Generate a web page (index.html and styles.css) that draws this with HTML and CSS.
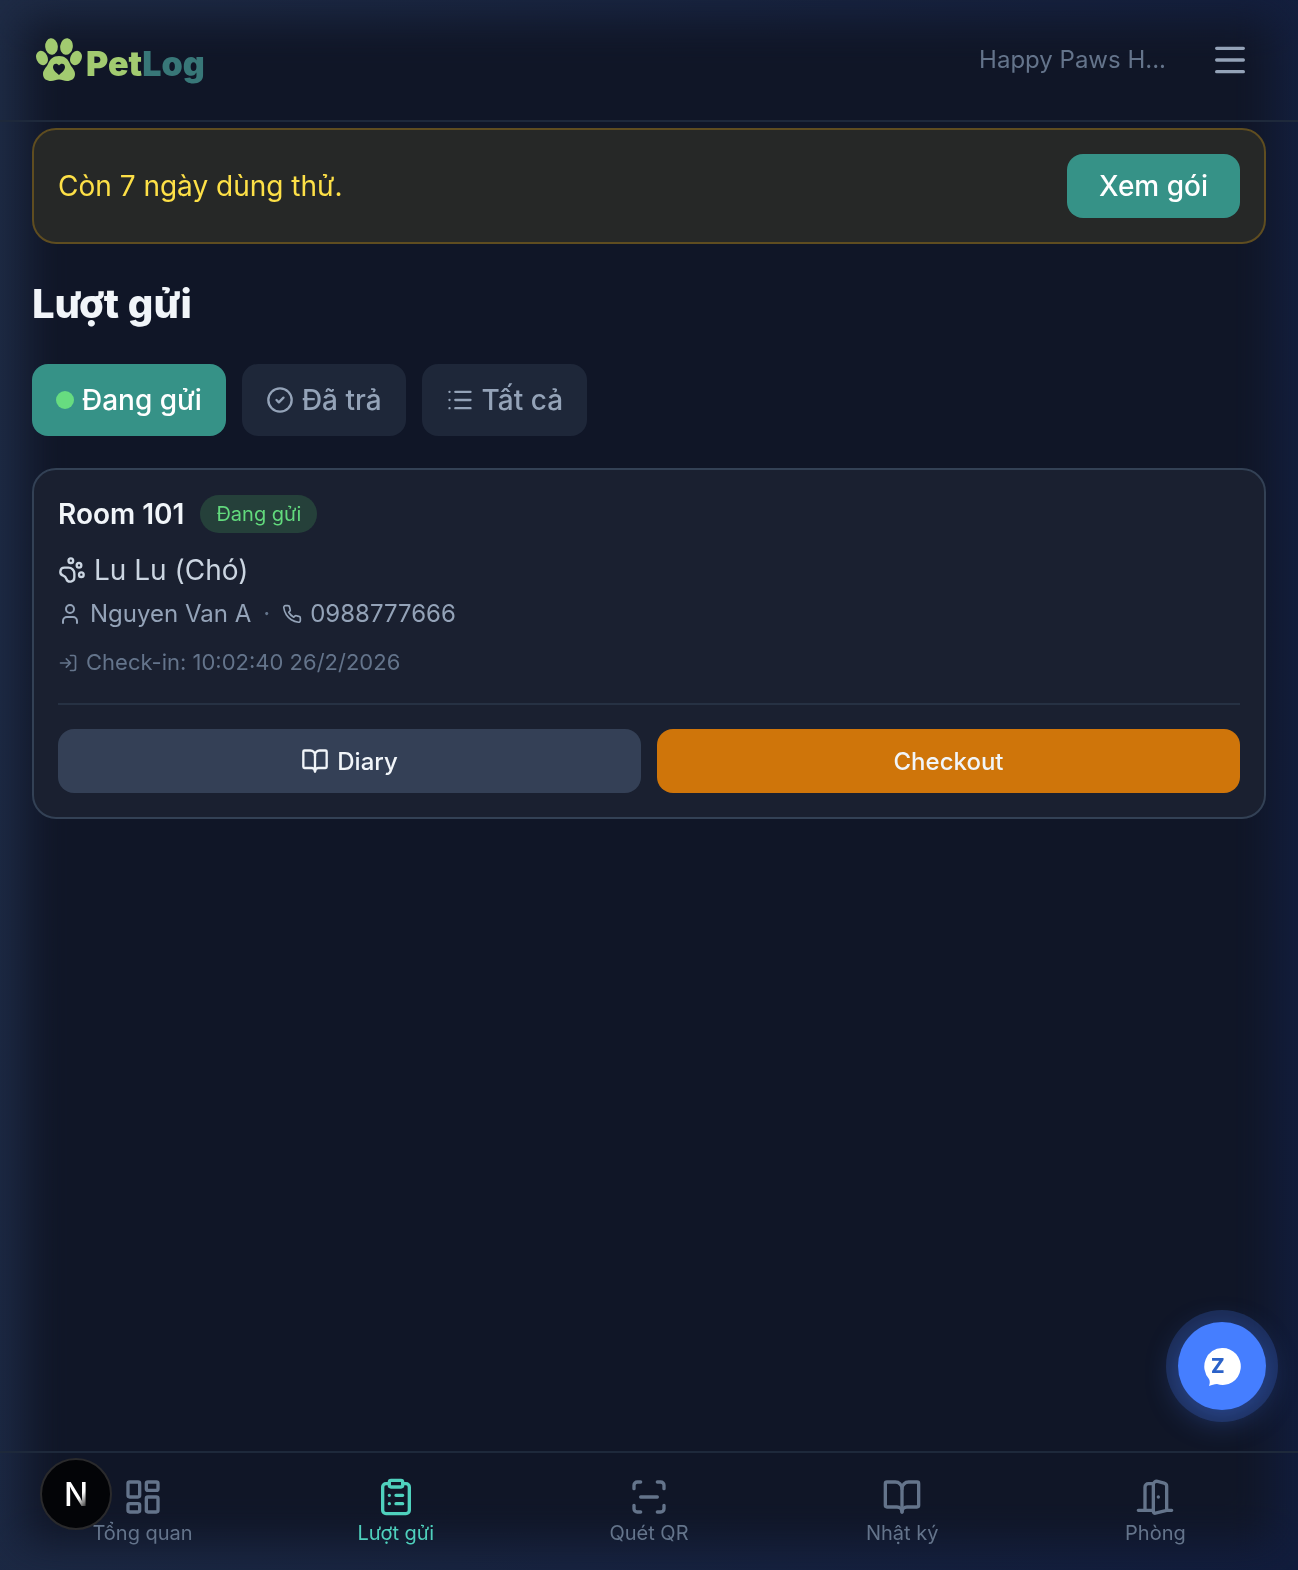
FILE: index.html
```
<!DOCTYPE html>
<html lang="vi">
<head>
<meta charset="utf-8">
<meta name="viewport" content="width=device-width, initial-scale=1">
<title>PetLog - Lượt gửi</title>
<link rel="stylesheet" href="styles.css">
</head>
<body>
	<header class="topbar">
		<a href="#" class="logo" aria-label="PetLog">
			<svg class="logo-paw" viewBox="0 0 46 44" aria-hidden="true">
				<g fill="#a2cb70">
					<ellipse cx="15.500" cy="8.500" rx="6.300" ry="8.300" transform="rotate(-6 15.500 8.500)"/>
					<ellipse cx="30.500" cy="8.500" rx="6.300" ry="8.300" transform="rotate(8 30.500 8.500)"/>
					<ellipse cx="6" cy="20" rx="5.600" ry="7.500" transform="rotate(-24 6 20)"/>
					<ellipse cx="40" cy="20" rx="5.600" ry="7.500" transform="rotate(24 40 20)"/>
					<path d="M23 18c6 0 9 3 11 8 2 4 5 6 5 10 0 5-4 7-8 7-3 0-5-1.500-8-1.500S18 43 15 43c-4 0-8-2-8-7 0-4 3-6 5-10 2-5 5-8 11-8z"/>
				</g>
				<path fill="#101628" d="M23 37c-3-2.500-6-5-6-8 0-3.500 4-4.500 6-1.500 2-3 6-2 6 1.500 0 3-3 5.500-6 8z"/>
			</svg>
			<span class="logo-text">Pet<span class="logo-log">Log</span></span>
		</a>
		<div class="topbar-right">
			<span class="shop-name">Happy Paws H...</span>
			<button type="button" class="menu-btn" aria-label="Menu">
				<svg class="icon icon-xl" viewBox="0 0 24 24"><path d="M4 5h16M4 12h16M4 19h16"/></svg>
			</button>
		</div>
	</header>

	<main class="content">
		<div class="trial">
			<span>Còn 7 ngày dùng thử.</span>
			<button type="button" class="trial-btn">Xem gói</button>
		</div>

		<h1>Lượt gửi</h1>

		<div class="tabs">
			<button type="button" class="tab tab-active"><span class="dot"></span>Đang gửi</button>
			<button type="button" class="tab">
				<svg class="icon icon-lg" viewBox="0 0 24 24"><circle cx="12" cy="12" r="10"/><path d="m9 12 2 2 4-4"/></svg>
				Đã trả
			</button>
			<button type="button" class="tab">
				<svg class="icon icon-lg" viewBox="0 0 24 24"><path d="M3 5h.01M3 12h.01M3 19h.01M8 5h13M8 12h13M8 19h13"/></svg>
				Tất cả
			</button>
		</div>

		<article class="card">
			<div class="card-head">
				<h2>Room 101</h2>
				<span class="badge">Đang gửi</span>
			</div>
			<div class="pet">
				<svg class="icon icon-lg" viewBox="0 0 24 24"><circle cx="11" cy="4" r="2"/><circle cx="18" cy="8" r="2"/><circle cx="20" cy="16" r="2"/><path d="M9 10a5 5 0 0 1 5 5v3.500a3.500 3.500 0 0 1-6.840 1.045Q6.520 17.480 4.460 16.840A3.500 3.500 0 0 1 5.500 10Z"/></svg>
				Lu Lu (Chó)
			</div>
			<div class="owner">
				<svg class="icon icon-md" viewBox="0 0 24 24"><path d="M19 21v-2a4 4 0 0 0-4-4H9a4 4 0 0 0-4 4v2"/><circle cx="12" cy="7" r="4"/></svg>
				<span>Nguyen Van A</span>
				<span class="sep">·</span>
				<a href="tel:0988777666" class="phone">
					<svg class="icon icon-sm" viewBox="0 0 24 24"><path d="M22 16.920v3a2 2 0 0 1-2.180 2 19.790 19.790 0 0 1-8.630-3.070 19.500 19.500 0 0 1-6-6 19.790 19.790 0 0 1-3.070-8.670A2 2 0 0 1 4.110 2h3a2 2 0 0 1 2 1.720 12.840 12.840 0 0 0 .7 2.810 2 2 0 0 1-.45 2.110L8.090 9.910a16 16 0 0 0 6 6l1.270-1.270a2 2 0 0 1 2.110-.45 12.840 12.840 0 0 0 2.810.7A2 2 0 0 1 22 16.920z"/></svg>
					0988777666
				</a>
			</div>
			<div class="checkin">
				<svg class="icon icon-sm" viewBox="0 0 24 24"><path d="m10 17 5-5-5-5M15 12H3M15 3h4a2 2 0 0 1 2 2v14a2 2 0 0 1-2 2h-4"/></svg>
				Check-in: 10:02:40 26/2/2026
			</div>
			<div class="actions">
				<button type="button" class="btn btn-diary">
					<svg class="icon icon-lg" viewBox="0 0 24 24"><path d="M12 7v14"/><path d="M3 18a1 1 0 0 1-1-1V4a1 1 0 0 1 1-1h5a4 4 0 0 1 4 4 4 4 0 0 1 4-4h5a1 1 0 0 1 1 1v13a1 1 0 0 1-1 1h-6a3 3 0 0 0-3 3 3 3 0 0 0-3-3z"/></svg>
					Diary
				</button>
				<button type="button" class="btn btn-checkout">Checkout</button>
			</div>
		</article>
	</main>

	<nav class="bottom-nav">
		<a href="#">
			<svg class="icon icon-xl" viewBox="0 0 24 24"><rect x="3" y="3" width="7" height="9" rx="1"/><rect x="14" y="3" width="7" height="5" rx="1"/><rect x="14" y="12" width="7" height="9" rx="1"/><rect x="3" y="16" width="7" height="5" rx="1"/></svg>
			<span>Tổng quan</span>
		</a>
		<a href="#" class="current">
			<svg class="icon icon-xl" viewBox="0 0 24 24"><rect x="8" y="2" width="8" height="4" rx="1"/><path d="M16 4h2a2 2 0 0 1 2 2v14a2 2 0 0 1-2 2H6a2 2 0 0 1-2-2V6a2 2 0 0 1 2-2h2M12 11h4M12 16h4M8 11h.01M8 16h.01"/></svg>
			<span>Lượt gửi</span>
		</a>
		<a href="#">
			<svg class="icon icon-xl" viewBox="0 0 24 24"><path d="M3 7V5a2 2 0 0 1 2-2h2M17 3h2a2 2 0 0 1 2 2v2M21 17v2a2 2 0 0 1-2 2h-2M7 21H5a2 2 0 0 1-2-2v-2M7 12h10"/></svg>
			<span>Quét QR</span>
		</a>
		<a href="#">
			<svg class="icon icon-xl" viewBox="0 0 24 24"><path d="M12 7v14"/><path d="M3 18a1 1 0 0 1-1-1V4a1 1 0 0 1 1-1h5a4 4 0 0 1 4 4 4 4 0 0 1 4-4h5a1 1 0 0 1 1 1v13a1 1 0 0 1-1 1h-6a3 3 0 0 0-3 3 3 3 0 0 0-3-3z"/></svg>
			<span>Nhật ký</span>
		</a>
		<a href="#">
			<svg class="icon icon-xl" viewBox="0 0 24 24"><path d="M11 20H2M11 4.562v16.157a1 1 0 0 0 1.242.970L19 20V5.562a2 2 0 0 0-1.515-1.940l-4-1A2 2 0 0 0 11 4.561zM11 4H8a2 2 0 0 0-2 2v14M14 12h.01M22 20h-3"/></svg>
			<span>Phòng</span>
		</a>
	</nav>

	<!-- floating buttons -->
	<a href="#" class="chat" aria-label="Zalo">
		<svg viewBox="0 0 40 40" width="40" height="40" aria-hidden="true">
			<path fill="#fff" d="M20 2a18 18.500 0 1 1-5 36c-3 0-5 1-8 2 1-3 1-5 0-7A18 18.500 0 0 1 20 2z"/>
			<text x="9" y="27" class="chat-z">Z</text>
		</svg>
	</a>
	<button type="button" class="dev-btn" aria-label="Dev tools"><span>N</span></button>
</body>
</html>
```
FILE: styles.css
```
* {
	box-sizing: border-box;
}
body {
	margin: 0;
	min-height: 100vh;
	display: flex;
	flex-direction: column;
	font-family: Inter, "Liberation Sans", sans-serif;
	font-size: 28px;
	line-height: 40px;
	color: #f1f5f9;
	background: linear-gradient(100deg, #1e2b45, #111c3c);
}
/* dark page with a soft glow left round the edges */
body::before {
	content: "";
	position: fixed;
	inset: 20px 24px 28px;
	background: #101627;
	filter: blur(20px);
	z-index: -1;
}
button {
	font-family: inherit;
	color: inherit;
	border: 0;
	cursor: pointer;
}
a {
	color: inherit;
	text-decoration: none;
}
h1, h2 {
	margin: 0;
}
.icon {
	flex: none;
	fill: none;
	stroke: currentColor;
	stroke-width: 2;
	stroke-linecap: round;
	stroke-linejoin: round;
}
.icon-sm {
	width: 20px;
	height: 20px;
}
.icon-md {
	width: 24px;
	height: 24px;
}
.icon-lg {
	width: 28px;
	height: 28px;
}
.icon-xl {
	width: 40px;
	height: 40px;
}

/* header */
.topbar {
	display: flex;
	align-items: center;
	justify-content: space-between;
	height: 122px;
	padding: 0 32px;
	border-bottom: 2px solid #1e293b;
}
.logo {
	display: flex;
	align-items: center;
	gap: 4px;
	padding-left: 4px;
}
.logo-paw {
	width: 46px;
	height: 44px;
}
.logo-text {
	font-size: 34px;
	font-weight: 900;
	color: #a2cb70;
	padding-top: 8px;
}
.logo-log {
	color: #387778;
}
.topbar-right {
	display: flex;
	align-items: center;
	gap: 28px;
}
.shop-name {
	font-size: 24px;
	color: #64748b;
}
.menu-btn {
	display: flex;
	padding: 16px;
	background: none;
	color: #94a3b8;
}

/* page */
.content {
	flex: 1;
	padding: 6px 32px 32px;
}
.trial {
	display: flex;
	align-items: center;
	justify-content: space-between;
	padding: 24px;
	border: 2px solid #5f4d20;
	border-radius: 24px;
	background: #262827;
	color: #fde047;
}
.trial-btn {
	height: 64px;
	padding: 0 32px;
	border-radius: 16px;
	background: #369287;
	color: #fff;
	font-size: 28px;
	font-weight: 500;
}
h1 {
	margin: 32px 0;
	font-size: 40px;
	line-height: 56px;
	font-weight: 800;
}
.tabs {
	display: flex;
	gap: 16px;
	margin-bottom: 32px;
}
.tab {
	display: flex;
	align-items: center;
	gap: 8px;
	height: 72px;
	padding: 0 24px;
	border-radius: 16px;
	background: #1e2739;
	color: #94a3b8;
	font-size: 28px;
	font-weight: 500;
}
.tab-active {
	background: #369287;
	color: #fff;
}
.dot {
	width: 18px;
	height: 18px;
	border-radius: 50%;
	background: #67dc80;
}

/* booking card */
.card {
	padding: 24px;
	border: 2px solid #334155;
	border-radius: 24px;
	background: #1a2030;
}
.card-head {
	display: flex;
	align-items: center;
	gap: 16px;
	margin-bottom: 16px;
}
.card h2 {
	font-size: 28px;
	font-weight: 600;
}
.badge {
	padding: 4px 16px;
	border-radius: 20px;
	background: #25403a;
	color: #62da7d;
	font-size: 20px;
	line-height: 30px;
}
.pet,
.owner,
.phone,
.checkin {
	display: flex;
	align-items: center;
	gap: 8px;
}
.pet {
	margin-bottom: 8px;
	color: #cbd5e1;
}
.owner {
	margin-bottom: 16px;
	font-size: 24px;
	line-height: 32px;
	color: #94a3b8;
}
.sep {
	padding: 0 4px;
	color: #64748b;
}
.checkin {
	font-size: 22px;
	line-height: 33px;
	color: #64748b;
}
.actions {
	display: grid;
	grid-template-columns: 1fr 1fr;
	gap: 16px;
	margin-top: 24px;
	padding-top: 24px;
	border-top: 2px solid #263143;
}
.btn {
	display: flex;
	align-items: center;
	justify-content: center;
	gap: 8px;
	height: 64px;
	border-radius: 16px;
	font-size: 24px;
	font-weight: 500;
}
.btn-diary {
	background: #344056;
}
.btn-checkout {
	background: #cf750a;
}

/* bottom navigation */
.bottom-nav {
	display: grid;
	grid-template-columns: repeat(5, 1fr);
	height: 119px;
	padding: 24px 16px 0;
	border-top: 2px solid #1e293b;
	color: #64748b;
	font-size: 20px;
	line-height: 32px;
}
.bottom-nav a {
	display: flex;
	flex-direction: column;
	align-items: center;
}
.bottom-nav .current {
	color: #4fd1bd;
}

.chat {
	position: fixed;
	right: 32px;
	bottom: 160px;
	display: flex;
	align-items: center;
	justify-content: center;
	width: 88px;
	height: 88px;
	border-radius: 50%;
	background: #457eff;
	box-shadow: 0 0 0 12px rgba(69, 126, 255, 0.2), 0 8px 32px rgba(69, 126, 255, 0.4);
}
.chat-z {
	fill: #2b62c9;
	font-size: 20px;
	font-weight: 800;
}
.dev-btn {
	position: fixed;
	left: 40px;
	bottom: 40px;
	width: 72px;
	height: 72px;
	padding: 0;
	border: 2px solid #2a2a2c;
	border-radius: 50%;
	background: #030407;
	font-size: 32px;
	font-weight: 500;
}
.dev-btn span {
	background: linear-gradient(130deg, #fff 60%, #333 85%);
	background-clip: text;
	-webkit-background-clip: text;
	color: transparent;
}
```
